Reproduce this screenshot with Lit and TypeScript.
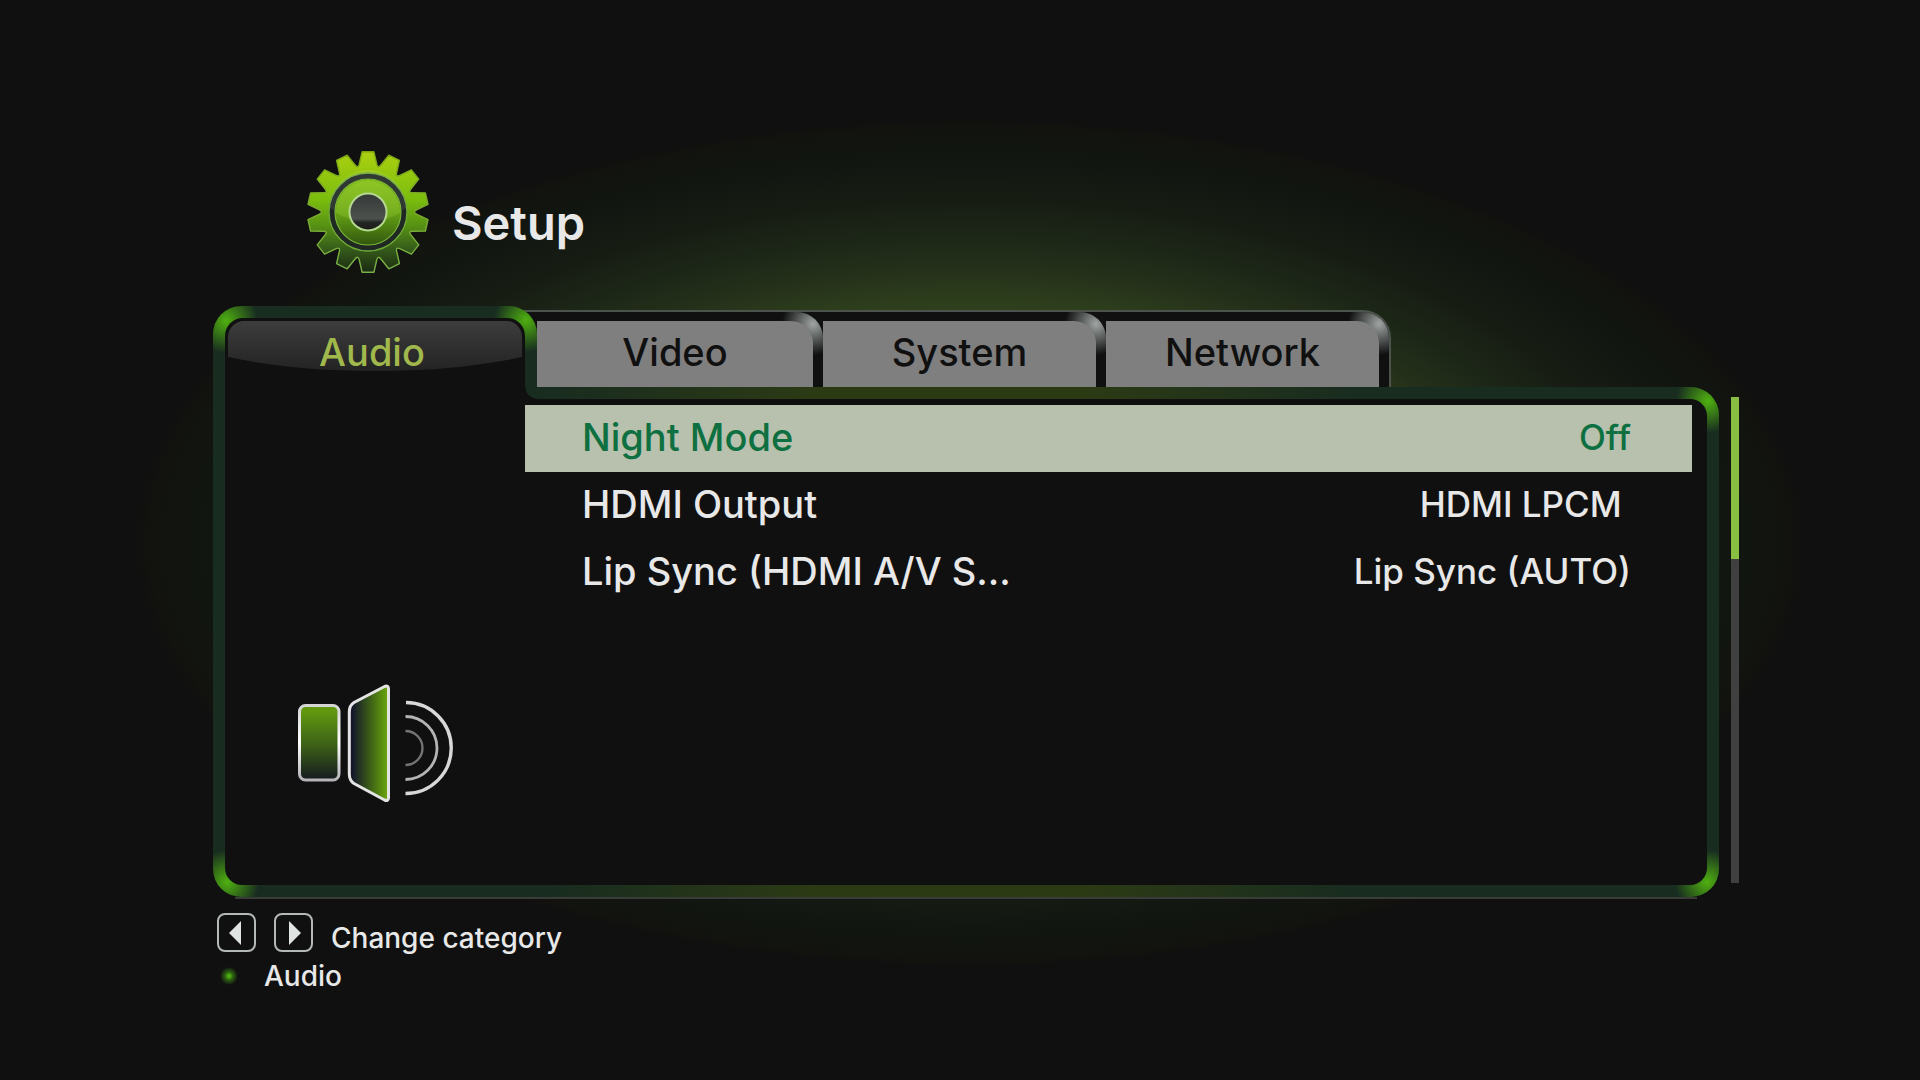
import { LitElement, html, css, svg } from "lit";
import { customElement, state } from "lit/decorators.js";
import { classMap } from "lit/directives/class-map.js";

interface Setting {
  label: string;
  value: string;
}

const TABS = ["Audio", "Video", "System", "Network"];

const SETTINGS: Setting[] = [
  { label: "Night Mode", value: "Off" },
  { label: "HDMI Output", value: "HDMI LPCM\u00a0" },
  { label: "Lip Sync (HDMI A/V S...", value: "Lip Sync (AUTO)" },
];

/** Outline of a cog with evenly spaced, tapered teeth. */
function cogPath(teeth: number, tip: number, root: number): string {
  const point = (r: number, deg: number) => {
    const a = ((deg - 90) * Math.PI) / 180;
    return `${(r * Math.cos(a)).toFixed(2)} ${(r * Math.sin(a)).toFixed(2)}`;
  };
  const step = 360 / teeth;
  let d = "";
  for (let i = 0; i < teeth; i++) {
    const c = i * step;
    d += `${i ? "L" : "M"}${point(tip, c - 5.6)}L${point(tip, c + 5.6)}`;
    d += `L${point(root + 3, c + 10.2)}Q${point(root - 2, c + step / 2)} ${point(root + 3, c + step - 10.2)}`;
  }
  return d + "Z";
}

@customElement("gear-icon")
export class GearIcon extends LitElement {
  static styles = css`
    :host { display: block; flex: none; }
    .art { display: block; width: 124px; height: 126px; }
  `;
  render() {
    return html`<svg class="art" viewBox="-62 -62 124 126" aria-hidden="true">
      ${svg`
      <defs>
        <linearGradient id="body" x1="0" y1="0" x2="0" y2="1">
          <stop offset="0" stop-color="#abd010"/>
          <stop offset=".4" stop-color="#7abd0e"/>
          <stop offset=".62" stop-color="#569014"/>
          <stop offset=".82" stop-color="#34581a"/>
          <stop offset="1" stop-color="#1a2a12"/>
        </linearGradient>
        <linearGradient id="disc" x1="0" y1="0" x2="0" y2="1">
          <stop offset="0" stop-color="#86c01e"/>
          <stop offset=".5" stop-color="#66a414"/>
          <stop offset="1" stop-color="#33560f"/>
        </linearGradient>
        <linearGradient id="edge" x1="0" y1="0" x2="0" y2="1">
          <stop offset="0" stop-color="#7da614"/>
          <stop offset="1" stop-color="#78b048"/>
        </linearGradient>
        <linearGradient id="hole" x1="0" y1="0" x2="0" y2="1">
          <stop offset="0" stop-color="#343836"/>
          <stop offset=".68" stop-color="#4c514e"/>
          <stop offset=".78" stop-color="#232624"/>
          <stop offset="1" stop-color="#1a1c1a"/>
        </linearGradient>
      </defs>
      <path d=${cogPath(14, 60.5, 46)} fill="url(#body)" stroke="url(#edge)" stroke-width="1.4" stroke-linejoin="round"/>
      <circle r="39" fill="#1f2822" stroke="#6fa83a" stroke-width="1.4"/>
      <path d="M-38 -4A38 38 0 0 1 38 -4Q0 20 -38 -4Z" fill="#fff" opacity=".08"/>
      <circle r="33" fill="url(#disc)" stroke="#78b236" stroke-width="1.2"/>
      <path d="M-32 1A32 32 0 0 1 32 1Q0 18 -32 1Z" fill="#b6e04a" opacity=".22"/>
      <circle r="18.5" fill="url(#hole)" stroke="#b4d890" stroke-width="2"/>`}
    </svg>`;
  }
}

@customElement("speaker-icon")
export class SpeakerIcon extends LitElement {
  static styles = css`
    :host { display: block; }
    .art { display: block; width: 158px; height: 120px; }
  `;
  render() {
    return html`<svg class="art" viewBox="0 0 158 120" fill="none" aria-hidden="true">
      ${svg`
      <defs>
        <linearGradient id="box" x1="0" y1="0" x2="0" y2="1">
          <stop offset=".08" stop-color="#61980f"/>
          <stop offset=".55" stop-color="#3b5e18"/>
          <stop offset="1" stop-color="#151a20"/>
        </linearGradient>
        <linearGradient id="cone" x1="0" y1="0" x2="1" y2="0">
          <stop offset=".08" stop-color="#14172a"/>
          <stop offset=".5" stop-color="#3a5a18"/>
          <stop offset="1" stop-color="#6cab0c"/>
        </linearGradient>
        <linearGradient id="rim" x1="0" y1="0" x2="0" y2="1">
          <stop offset="0" stop-color="#d4d4d4"/>
          <stop offset=".5" stop-color="#fff"/>
          <stop offset="1" stop-color="#b4b4b8"/>
        </linearGradient>
      </defs>
      <rect x="2.5" y="22.5" width="39.500" height="74.500" rx="6" fill="url(#box)" stroke="url(#rim)" stroke-width="3"/>
      <path d="M52.300 29Q52.300 22.500 57 19.500L87.500 3.500Q91.500 2 91.500 6V114.500Q91.500 118.500 87.500 117L57 100.500Q52.300 97.500 52.300 91Z" fill="url(#cone)" stroke="#e4e4e4" stroke-width="3"/>
      <path d="M109 19.500A45.500 45.500 0 0 1 108.500 110.500" stroke="#d8d8d8" stroke-width="3.400"/>
      <path d="M108.500 33.500A31.500 31.500 0 0 1 108.500 96.500" stroke="#b4b4b4" stroke-width="2.800"/>
      <path d="M108.500 48A17 17 0 0 1 108.500 82" stroke="#747474" stroke-width="2.400"/>`}
    </svg>`;
  }
}

@customElement("app-root")
export class AppRoot extends LitElement {
  static styles = css`
    :host {
      --ground: #101010;
      --rim: #182c20;
      --spark: #4fb010;
      display: block;
      box-sizing: border-box;
      min-height: 100vh;
      padding: 150px 181px 40px 213px;
      color: #e8e8e8;
      font: 500 38px/48px Inter, "Liberation Sans", sans-serif;
      background:
        radial-gradient(835px 424px at 970px 543px,
          #3b531f 0%, #374d1e 40%, #2d3e1c 57%, #25301a 65%, #1c2617 73%,
          #171c13 81%, #111611 91%, #12130e 98%, var(--ground) 100%)
        var(--ground);
    }
    * { box-sizing: border-box; }
    button { margin: 0; padding: 0; border: 0; background: none; color: inherit; font: inherit; cursor: pointer; }

    .heading { display: flex; align-items: center; gap: 22px; padding-left: 93px; height: 126px; }
    .title { margin: 20px 0 0; font-size: 47px; line-height: 56px; font-weight: 600; }

    .frame { display: grid; grid-template-columns: minmax(0, 1fr) 8px; column-gap: 12px; margin-top: 30px; }

    .tabs { grid-column: 1 / -1; display: flex; align-items: flex-end; }
    .tab { display: block; position: relative; }
    .face { display: flex; align-items: center; justify-content: center; height: 66px; padding-bottom: 4px; }

    .tab.current {
      z-index: 2;
      flex: none;
      width: 324px;
      height: 93px;
      margin-bottom: -12px;
      padding: 12px 12px 0;
      border-radius: 28px 28px 0 0;
      color: #a0b84c;
      background:
        radial-gradient(circle at 13px 15px, var(--spark), transparent 32px),
        radial-gradient(circle at calc(100% - 11px) 14px, var(--spark), transparent 32px),
        var(--rim);
    }
    .tab.current::after {
      content: "";
      position: absolute;
      right: 0;
      bottom: 0;
      width: 12px;
      height: 12px;
      background: radial-gradient(circle at 100% 0, var(--rim) 11px, var(--ground) 12px);
    }
    .well { display: block; height: 81px; padding: 3px 3px 0; border-radius: 18px 18px 0 0; background: var(--ground); }
    .gloss {
      display: block;
      height: 50px;
      margin-bottom: -50px;
      border-radius: 16px 16px 0 0;
      background: linear-gradient(#3d3d3d, #232323);
      clip-path: ellipse(72% 100% at 50% 0);
    }
    .current .face { position: relative; padding-right: 6px; }

    .others {
      display: flex;
      margin-left: -26px;
      padding-left: 26px;
      border-top: 2px solid #4c524c;
      border-right: 2px solid #4c524c;
      border-radius: 0 28px 0 0;
      background: var(--ground);
    }
    .tab.other {
      width: 283px;
      padding: 9px 10px 0 0;
      border-radius: 0 26px 0 0;
      color: var(--ground);
      background: radial-gradient(circle at calc(100% - 10px) 12px, #a0a4a3, #5c605e 14px, transparent 31px);
    }
    .tab.other:first-child { width: 286px; }
    .other .face { border-radius: 0 22px 0 0; background: #7f7f7f; }

    .panel {
      min-height: 510px;
      padding: 12px;
      display: grid;
      border-radius: 0 28px 28px 28px;
      background:
        radial-gradient(circle at calc(100% - 11px) 14px, var(--spark), transparent 32px),
        radial-gradient(circle at calc(100% - 12px) calc(100% - 15px), var(--spark), transparent 32px),
        radial-gradient(circle at 14px calc(100% - 15px), var(--spark), transparent 32px),
        linear-gradient(90deg, #182c20 22%, #2c3a14 40%, #2c3a14 58%, #182c20 76%);
    }
    .inside {
      display: grid;
      grid-template-columns: 300px minmax(0, 1fr);
      padding: 6px 15px 0 0;
      border-radius: 0 17px 17px 17px;
      background: var(--ground);
    }
    .picture { align-self: end; padding: 0 0 82px 72px; }

    .list { margin: 0; padding: 0; list-style: none; }
    .row {
      display: flex;
      align-items: center;
      justify-content: space-between;
      width: 100%;
      height: 67px;
      padding: 0 61px 4px 57px;
      text-align: left;
    }
    .row.selected { color: #0e7040; background: #b8c0ae; }
    .value { font-size: 35px; }

    .scroll { margin: 10px 0 14px; background: #404040; }
    .thumb { height: 162px; background: #88bf42; }
    .ledge { height: 2px; margin: 0 22px; background: #3a3c3a; }

    .help { display: grid; gap: 10px; margin-top: 14px; padding-left: 4px; font-size: 28px; line-height: 28px; }
    .keys { display: flex; align-items: flex-end; gap: 18px; }
    .key { width: 39px; height: 39px; border: 2px solid #b4b8b6; border-radius: 8px; display: grid; place-items: center; }
    .arrow { display: block; width: 15px; height: 26px; fill: #e0e4e2; }
    .where { display: flex; align-items: center; gap: 26px; }
    .dot { width: 18px; height: 18px; margin-left: 3px; border-radius: 50%; background: radial-gradient(circle, #4fb010 1px, #2c6212 4px, transparent 9px); }
  `;

  @state() private current = "Audio";
  @state() private selected = 0;

  private tab(name: string) {
    const here = name === this.current;
    return html`<button
      role="tab"
      aria-selected=${here}
      class=${classMap({ tab: true, current: here, other: !here })}
      @click=${() => (this.current = name)}
    >${here
      ? html`<span class="well"><span class="gloss"></span><span class="face">${name}</span></span>`
      : html`<span class="face">${name}</span>`}</button>`;
  }

  render() {
    return html`
      <header class="heading">
        <gear-icon></gear-icon>
        <h1 class="title">Setup</h1>
      </header>
      <main class="frame">
        <div class="tabs" role="tablist">
          ${this.tab(this.current)}
          <div class="others" role="presentation">
            ${TABS.filter((t) => t !== this.current).map((t) => this.tab(t))}
          </div>
        </div>
        <section class="panel" role="tabpanel">
          <div class="inside">
            <div class="picture"><speaker-icon></speaker-icon></div>
            <ul class="list">
              ${SETTINGS.map((s, i) => html`<li>
                <button
                  class=${classMap({ row: true, selected: i === this.selected })}
                  @click=${() => (this.selected = i)}
                ><span>${s.label}</span><span class="value">${s.value}</span></button>
              </li>`)}
            </ul>
          </div>
        </section>
        <div class="scroll"><div class="thumb"></div></div>
        <div class="ledge"></div>
      </main>
      <footer class="help">
        <div class="keys">
          <button class="key" aria-label="Previous category">
            <svg class="arrow" viewBox="0 0 15 26"><path d="M12 1V25L0 13Z"/></svg>
          </button>
          <button class="key" aria-label="Next category">
            <svg class="arrow" viewBox="0 0 15 26"><path d="M3 1V25L15 13Z"/></svg>
          </button>
          <span>Change category</span>
        </div>
        <div class="where"><span class="dot"></span><span>${this.current}</span></div>
      </footer>
    `;
  }
}
